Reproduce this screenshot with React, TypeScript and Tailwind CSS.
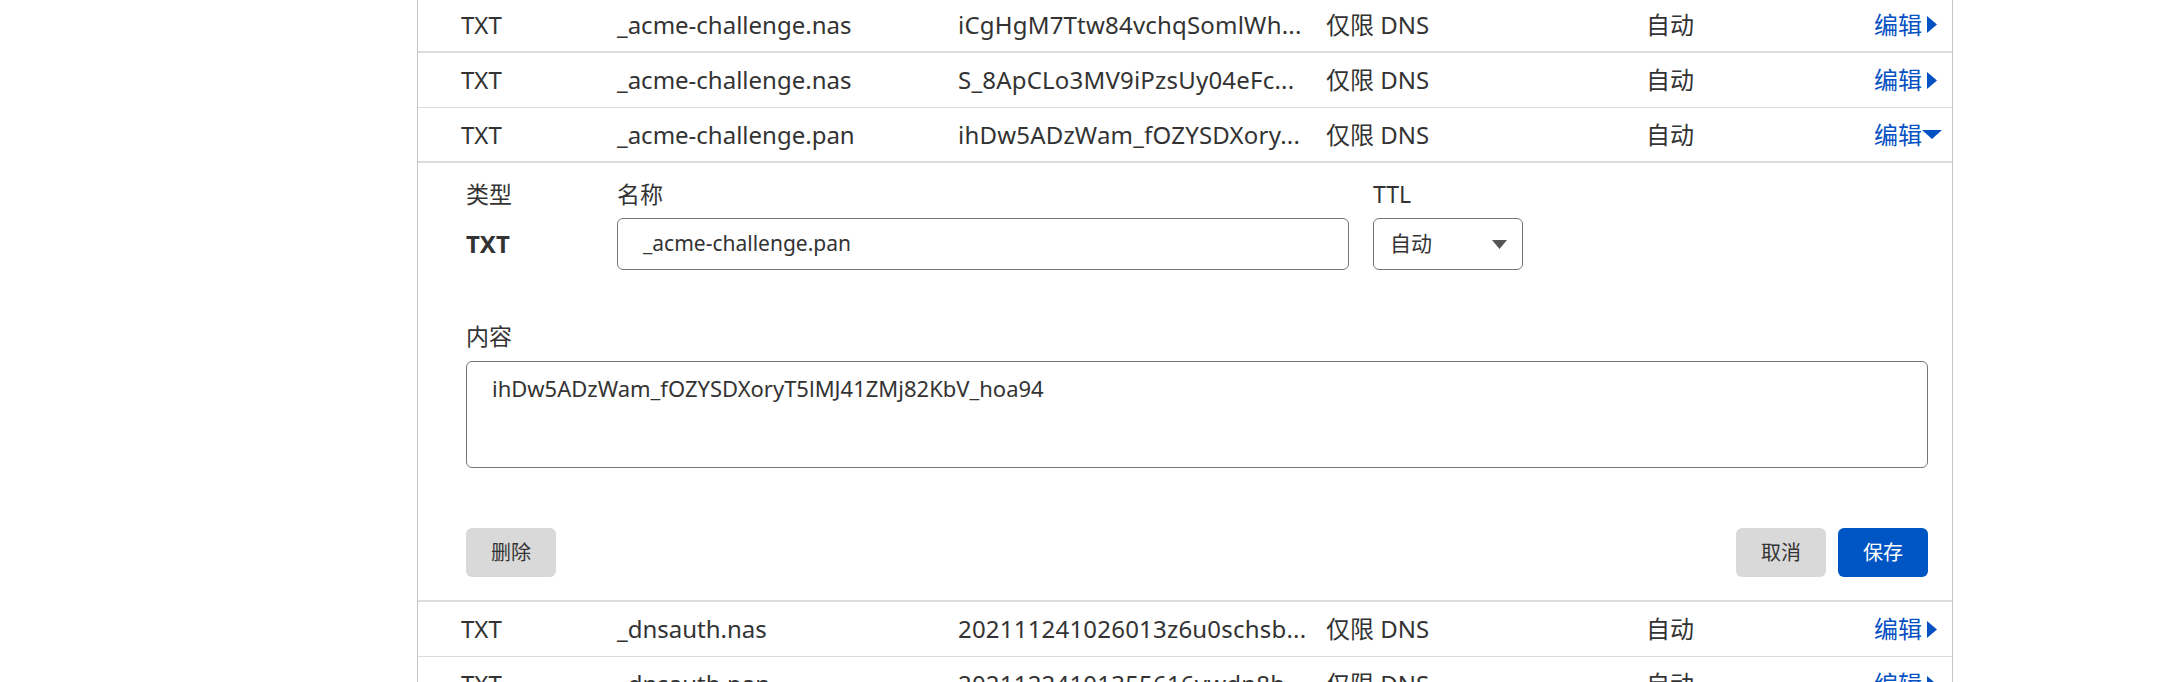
import React from 'react';

type Row = {
  type: string;
  name: string;
  content: string;
  proxy: string;
  ttl: string;
  open?: boolean;
  border: string;
};

const rows: Row[] = [
  { type: 'TXT', name: '_acme-challenge.nas', content: 'iCgHgM7Ttw84vchqSomlWh...', proxy: '仅限 DNS', ttl: '自动', border: 'border-b-2' },
  { type: 'TXT', name: '_acme-challenge.nas', content: 'S_8ApCLo3MV9iPzsUy04eFc...', proxy: '仅限 DNS', ttl: '自动', border: 'border-b' },
  { type: 'TXT', name: '_acme-challenge.pan', content: 'ihDw5ADzWam_fOZYSDXory...', proxy: '仅限 DNS', ttl: '自动', open: true, border: 'border-b-2' },
  { type: 'TXT', name: '_dnsauth.nas', content: '202111241026013z6u0schsb...', proxy: '仅限 DNS', ttl: '自动', border: 'border-b' },
  { type: 'TXT', name: '_dnsauth.pan', content: '20211224101355616ywdn8h...', proxy: '仅限 DNS', ttl: '自动', border: 'border-b' },
];

function Caret({ open }: { open?: boolean }) {
  return (
    <span className="w-[20px] h-[20px] flex items-center justify-center">
      {open ? (
        <svg width="20" height="10" viewBox="0 0 20 10">
          <path d="M0 0 L20 0 L10 9 Z" fill="#0752c3" />
        </svg>
      ) : (
        <svg width="10" height="17" viewBox="0 0 10 17">
          <path d="M0 0 L10 8.5 L0 17 Z" fill="#0752c3" />
        </svg>
      )}
    </span>
  );
}

function RecordRow({ row }: { row: Row }) {
  return (
    <div className={`h-[55px] flex items-center pl-[43px] pr-[10px] border-[#dcdcdc] ${row.border} text-[24px] text-[#333]`}>
      <div className="w-[156px]">{row.type}</div>
      <div className="w-[341px] whitespace-nowrap">{row.name}</div>
      <div className="w-[368px] whitespace-nowrap overflow-hidden tracking-[0.2px]">{row.content}</div>
      <div className="w-[320px] whitespace-nowrap">{row.proxy}</div>
      <div className="flex-1">{row.ttl}</div>
      <button className="flex items-center text-[#0752c3]">
        编辑
        <Caret open={row.open} />
      </button>
    </div>
  );
}

function EditPanel() {
  return (
    <div className="h-[439px] pl-[48px] pr-[24px] pt-[15px] border-b-2 border-[#dcdcdc] text-[#333]">
      <div className="flex gap-[24px]">
        <div className="w-[127px] flex flex-col">
          <span className="text-[23px] leading-[32px]">类型</span>
          <div className="h-[52px] mt-[8px] flex items-center text-[24px] font-bold">TXT</div>
        </div>
        <div className="w-[732px] flex flex-col">
          <span className="text-[23px] leading-[32px]">名称</span>
          <div className="h-[52px] mt-[8px] border border-[#767676] rounded-[6px] flex items-center pl-[25px] text-[21px]">
            _acme-challenge.pan
          </div>
        </div>
        <div className="w-[150px] flex flex-col">
          <span className="text-[23px] leading-[32px]">TTL</span>
          <div className="h-[52px] mt-[8px] border border-[#767676] rounded-[6px] flex items-center justify-between pl-[16px] pr-[15px] text-[21px]">
            自动
            <svg width="15" height="9" viewBox="0 0 15 9">
              <path d="M0 0 L15 0 L7.5 9 Z" fill="#555" />
            </svg>
          </div>
        </div>
      </div>

      <div className="mt-[50px] text-[23px] leading-[32px]">内容</div>
      <div className="mt-[9px] h-[107px] border border-[#767676] rounded-[6px] pl-[25px] pt-[10px] text-[22px] leading-[32px]">
        ihDw5ADzWam_fOZYSDXoryT5lMJ41ZMj82KbV_hoa94
      </div>

      <div className="mt-[60px] flex items-center">
        <button className="w-[90px] h-[49px] rounded-[6px] bg-[#d9d9d9] text-[20px] text-[#333]">删除</button>
        <div className="flex-1" />
        <button className="w-[90px] h-[49px] rounded-[6px] bg-[#d9d9d9] text-[20px] text-[#333]">取消</button>
        <button className="ml-[12px] w-[90px] h-[49px] rounded-[6px] bg-[#0055c4] text-[20px] text-white">保存</button>
      </div>
    </div>
  );
}

export default function App() {
  return (
    <div className="w-[2170px] h-[682px] overflow-hidden bg-white" style={{ fontFamily: '"Noto Sans", "Noto Sans CJK SC", sans-serif' }}>
      <div className="ml-[417px] w-[1536px] -mt-[2px] border-x border-[#c6c6c6]">
        {rows.map((row, i) => (
          <React.Fragment key={i}>
            <RecordRow row={row} />
            {row.open && <EditPanel />}
          </React.Fragment>
        ))}
      </div>
    </div>
  );
}
